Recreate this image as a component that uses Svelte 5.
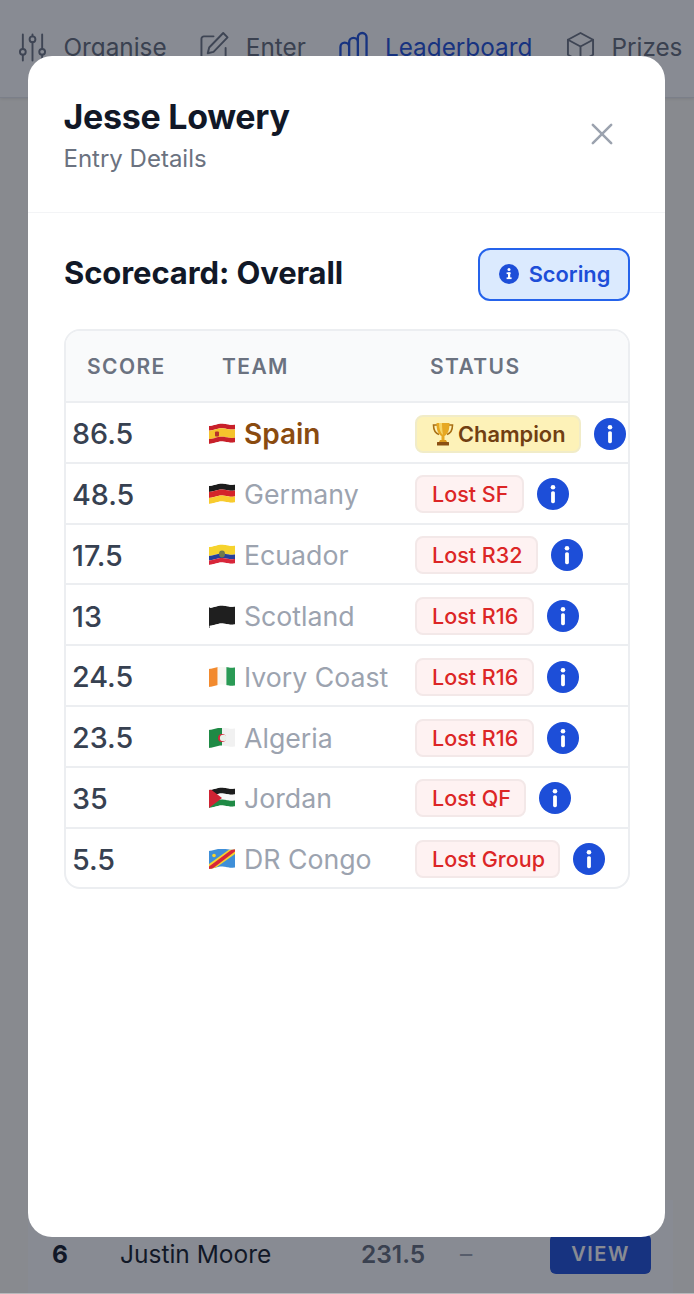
<script>
  const wave = (y, x) => y + 0.9 * Math.cos((x / 26) * Math.PI * 2.2) - x * 0.05;
  function band(a, b) {
    const xs = Array.from({ length: 27 }, (_, i) => i);
    const top = xs.map((x) => `${x},${wave(a, x).toFixed(2)}`);
    const bot = xs.slice().reverse().map((x) => `${x},${wave(b, x).toFixed(2)}`);
    return top.concat(bot).join(' ');
  }
  const rows = [
    { score: '86.5', team: 'Spain', flag: [['#c8202a', 1, 5.8], ['#f5c32c', 5.8, 14.2], ['#c8202a', 14.2, 19]], status: 'Champion', win: true },
    { score: '48.5', team: 'Germany', flag: [['#1c1c1c', 1, 7], ['#d4242a', 7, 13], ['#f8cb2e', 13, 19]], status: 'Lost SF' },
    { score: '17.5', team: 'Ecuador', flag: [['#f6d32d', 1, 10], ['#27409c', 10, 14.5], ['#d8263a', 14.5, 19]], status: 'Lost R32' },
    { score: '13', team: 'Scotland', flag: [['#1f1f1f', 1, 19]], status: 'Lost R16', black: true },
    { score: '24.5', team: 'Ivory Coast', vert: ['#f28a2e', '#f7f7f2', '#2a9a55'], status: 'Lost R16' },
    { score: '23.5', team: 'Algeria', vert2: true, status: 'Lost R16' },
    { score: '35', team: 'Jordan', flag: [['#1c1c1c', 1, 7], ['#f8f8f8', 7, 13], ['#1f8a45', 13, 19]], status: 'Lost QF', tri: true },
    { score: '5.5', team: 'DR Congo', congo: true, status: 'Lost Group' }
  ];
  const nav = [
    { t: 'Organise', i: 'org' },
    { t: 'Enter', i: 'ent' },
    { t: 'Leaderboard', i: 'lead', on: true },
    { t: 'Prizes', i: 'box' }
  ];
</script>

{#snippet flag(r, i)}
  <svg class="flag" viewBox="0 0 26 20" aria-hidden="true">
    <defs><clipPath id={'fc' + i}><polygon points={band(1, 19)} /></clipPath></defs>
    {#if r.black}
      <line x1="0.5" y1="1" x2="0.5" y2="22" stroke="#8b8b8b" stroke-width="1" />
    {/if}
    <g clip-path={'url(#fc' + i + ')'}>
      {#if r.flag}
        {#each r.flag as s}
          <polygon points={band(s[1], s[2])} fill={s[0]} />
        {/each}
      {/if}
      {#if r.team === 'Spain'}
        <rect x="6" y="7.500" width="4" height="5" rx="1" fill="#b5332a" />
      {/if}
      {#if r.team === 'Ecuador'}
        <ellipse cx="13" cy="9" rx="3" ry="3.4" fill="#6f7a4e" />
      {/if}
      {#if r.vert}
        <rect x="0" y="0" width="8.7" height="20" fill={r.vert[0]} />
        <rect x="8.7" y="0" width="8.7" height="20" fill={r.vert[1]} />
        <rect x="17.4" y="0" width="8.6" height="20" fill={r.vert[2]} />
      {/if}
      {#if r.vert2}
        <rect x="0" y="0" width="13" height="20" fill="#1f8a45" />
        <rect x="13" y="0" width="13" height="20" fill="#f1f1f1" />
        <circle cx="13" cy="10" r="4" fill="#d8263a" />
        <circle cx="14.2" cy="10" r="3.3" fill="#e9f1ea" />
      {/if}
      {#if r.tri}
        <polygon points="0,0 13,10 0,20" fill="#cf2333" />
      {/if}
      {#if r.congo}
        <rect x="0" y="0" width="26" height="20" fill="#3f8fd8" />
        <polygon points="0,20 0,15 21,0 26,0 26,5 5,20" fill="#f6d32d" />
        <polygon points="0,20 0,17.5 23.5,0 26,0 26,2.5 3,20" fill="#d8263a" />
        <circle cx="5" cy="6.5" r="1.8" fill="#f6d32d" />
      {/if}
    </g>
  </svg>
{/snippet}

{#snippet navIcon(k)}
  <svg class="navicon" viewBox="0 0 30 32" fill="none" stroke="currentColor" stroke-width="2" stroke-linecap="round" stroke-linejoin="round" aria-hidden="true">
    {#if k === 'org'}
      <path d="M5 3v15M5 24v6M15 3v2M15 11v19M25 3v15M25 24v6" />
      <circle cx="5" cy="21" r="3" /><circle cx="15" cy="8" r="3" /><circle cx="25" cy="21" r="3" />
    {:else if k === 'ent'}
      <path d="M14 5H4a2.500 2.500 0 0 0-2.500 2.500v20A2.500 2.500 0 0 0 4 30h20a2.500 2.500 0 0 0 2.500-2.500V17" />
      <path d="M24 1.500l4.500 4.500L14 21l-6 1.500 1.500-6z" />
    {:else if k === 'lead'}
      <path d="M1.500 32V16a4.500 4.500 0 0 1 9 0v16M10.500 32V11a4.500 4.500 0 0 1 9 0v21M19.500 32V6a4.500 4.500 0 0 1 9 0v26" stroke-width="2.400" />
    {:else}
      <path d="M15 1.500l13 7v15.500l-13 7-13-7V8.500z" />
      <path d="M2 8.500L15 15.500l13-7M15 15.500V31" />
    {/if}
  </svg>
{/snippet}

{#snippet info()}
  <svg class="info" viewBox="0 0 32 32" aria-hidden="true">
    <circle cx="16" cy="16" r="16" fill="#1d4ed8" />
    <circle cx="16" cy="9.2" r="2.3" fill="#fff" />
    <rect x="14.1" y="13.2" width="3.8" height="12" rx="1.6" fill="#fff" />
  </svg>
{/snippet}

<div class="page">
  <nav class="nav">
    {#each nav as n}
      <span class="navitem" class:on={n.on}>{@render navIcon(n.i)}{n.t}</span>
    {/each}
  </nav>
  <div class="spacer"></div>
  <div class="card">
    <div class="lrow">
      <span class="rank">6</span>
      <span class="name">Justin Moore</span>
      <span class="pts">231.5</span>
      <span class="dash">–</span>
      <span class="view">VIEW</span>
    </div>
  </div>
</div>

<div class="overlay">
  <div class="modal">
    <header class="head">
      <div>
        <h1>Jesse Lowery</h1>
        <p>Entry Details</p>
      </div>
      <svg class="close" viewBox="0 0 24 24" fill="none" stroke="currentColor" stroke-width="2.800" stroke-linecap="round" aria-hidden="true">
        <path d="M2 2l20 20M22 2L2 22" />
      </svg>
    </header>
    <section class="body">
      <div class="titlebar">
        <h2>Scorecard: Overall</h2>
        <button class="scoring">
          <svg viewBox="0 0 22 22" aria-hidden="true">
            <circle cx="11" cy="11" r="10" fill="#1d4ed8" />
            <rect x="8.6" y="9.4" width="4" height="1.7" fill="#fff" />
            <rect x="10" y="9.4" width="2.2" height="6" fill="#fff" />
            <rect x="8.6" y="14.4" width="5" height="1.7" fill="#fff" />
            <circle cx="11" cy="6.6" r="1.5" fill="#fff" />
          </svg>
          Scoring
        </button>
      </div>
      <div class="table">
        <div class="thead">
          <span>SCORE</span><span>TEAM</span><span class="st">STATUS</span>
        </div>
        {#each rows as r, i}
          <div class="tr">
            <span class="score">{r.score}</span>
            <span class="team" class:champ={r.win}>{@render flag(r, i)}{r.team}</span>
            <span class="status">
              <span class="badge" class:win={r.win}>
                {#if r.win}
                  <svg class="trophy" viewBox="0 0 22 24" fill="none" aria-hidden="true">
                    <path d="M5 3H1.500c0 5 1.500 8 5.500 9.500M17 3h3.500c0 5-1.500 8-5.500 9.500" stroke="#a86f14" stroke-width="1.600" />
                    <path d="M4.500 1h13c0 7-1.500 11-5 13v4h-3v-4c-3.500-2-5-6-5-13z" fill="#e6a822" />
                    <path d="M7 1h3c0 5 .5 8 1 12-2.500-2-4-6-4-12z" fill="#f6d465" />
                    <path d="M8 18h6l1 2H7z" fill="#d9971c" />
                    <rect x="5" y="20" width="12" height="3.500" rx=".5" fill="#8a4f12" />
                  </svg>
                {/if}
                {r.status}
              </span>
              {@render info()}
            </span>
          </div>
        {/each}
      </div>
    </section>
  </div>
  <div class="foot"></div>
</div>

<style>
  :global(body) {
    margin: 0;
    font-family: Inter, "Liberation Sans", sans-serif;
    background: #fffdf6;
  }
  .page {
    height: 1294px;
    overflow: hidden;
    display: flex;
    flex-direction: column;
    background: #fffdf6;
  }
  .nav {
    height: 98px;
    box-sizing: border-box;
    flex: none;
    background: #fff;
    border-bottom: 1px solid #e5e7eb;
    box-shadow: 0 1px 3px rgba(0, 0, 0, 0.1);
    display: flex;
    gap: 33.700px;
    padding: 31px 0 0 18px;
    font-size: 24.300px;
    color: #626a78;
    white-space: nowrap;
  }
  .navitem {
    display: flex;
    align-items: flex-start;
    gap: 16.500px;
    line-height: 32px;
  }
  .navitem.on {
    color: #1d4ed8;
  }
  .navicon {
    width: 29px;
    height: 32px;
    flex: none;
    color: #6b7280;
  }
  .on .navicon {
    color: #1d4ed8;
  }
  .spacer {
    flex: 1;
  }
  .card {
    margin: 0 21px 1px 28px;
    background: #fff;
    height: 93px;
    box-sizing: border-box;
    padding: 34px 22px 0 24px;
  }
  .lrow {
    display: flex;
    align-items: center;
    font-size: 24.500px;
    height: 40px;
    color: #111827;
  }
  .rank {
    font-weight: 700;
    width: 68px;
  }
  .name {
    width: 241px;
  }
  .pts {
    width: 99px;
    font-weight: 600;
    color: #626a78;
  }
  .dash {
    color: #9ca3af;
    width: 90px;
  }
  .view {
    width: 101px;
    height: 40px;
    flex: none;
    background: #1d4ed8;
    color: #fff;
    border-radius: 6px;
    font-size: 20px;
    font-weight: 600;
    letter-spacing: 1.500px;
    display: flex;
    align-items: center;
    justify-content: center;
  }
  .overlay {
    position: fixed;
    inset: 0;
    background: rgba(17, 24, 39, 0.5);
    backdrop-filter: blur(0.5px);
  }
  .foot {
    position: absolute;
    left: 0;
    right: 0;
    bottom: 0;
    height: 1px;
    background: #b8b9bc;
  }
  .modal {
    position: absolute;
    left: 28px;
    top: 56px;
    width: 637px;
    height: 1181px;
    background: #fff;
    border-radius: 24px;
    overflow: hidden;
  }
  .head {
    height: 157px;
    box-sizing: border-box;
    border-bottom: 1px solid #f3f4f6;
    padding: 40px 52px 0 35.500px;
    display: flex;
    justify-content: space-between;
    align-items: flex-start;
  }
  h1 {
    margin: 0;
    font-size: 34px;
    line-height: 42px;
    font-weight: 700;
    color: #111827;
    letter-spacing: -0.3px;
  }
  .head p {
    margin: 5px 0 0;
    font-size: 24px;
    line-height: 32px;
    color: #6b7280;
  }
  .close {
    width: 22px;
    height: 22px;
    margin-top: 27px;
    color: #9ca3af;
  }
  .body {
    padding: 35px 35px 0 36px;
  }
  .titlebar {
    display: flex;
    justify-content: space-between;
    align-items: center;
    height: 53px;
  }
  h2 {
    margin: 0 0 5px;
    font-size: 31px;
    font-weight: 700;
    color: #111827;
    letter-spacing: -0.1px;
  }
  .scoring {
    width: 152px;
    height: 53px;
    box-sizing: border-box;
    background: #dbeafe;
    border: 2px solid #2563eb;
    border-radius: 12px;
    color: #1d4ed8;
    font: 600 21.800px Inter, sans-serif;
    display: flex;
    align-items: center;
    justify-content: center;
    gap: 9px;
    padding: 0 0 2px;
  }
  .scoring svg {
    width: 22px;
    height: 22px;
  }
  .table {
    margin-top: 28px;
    border: 2px solid #eceef1;
    border-radius: 16px;
    overflow: hidden;
  }
  .thead {
    display: grid;
    grid-template-columns: 135px 207px 1fr;
    height: 70px;
    align-items: center;
    background: #f9fafb;
    font-size: 21px;
    font-weight: 600;
    letter-spacing: 1.400px;
    color: #6b7280;
  }
  .thead span {
    padding-left: 21px;
  }
  .thead .st {
    padding-left: 22px;
  }
  .tr {
    display: grid;
    grid-template-columns: 135px 207px 1fr;
    height: 60.800px;
    box-sizing: border-box;
    padding-top: 2.500px;
    align-items: center;
    border-top: 2px solid #eceef1;
  }
  .score {
    padding-left: 6px;
    font-size: 28.700px;
    font-weight: 500;
    color: #374151;
  }
  .team {
    display: flex;
    align-items: center;
    gap: 9px;
    padding-left: 8px;
    font-size: 26.700px;
    color: #9ca3af;
    white-space: nowrap;
  }
  .champ {
    color: #8a4b10;
    font-weight: 600;
    font-size: 28px;
  }
  .flag {
    width: 26px;
    height: 20px;
    flex: none;
    overflow: visible;
  }
  .status {
    display: flex;
    align-items: center;
    gap: 13px;
    padding-left: 7px;
  }
  .badge {
    display: flex;
    align-items: center;
    height: 38px;
    box-sizing: border-box;
    padding: 0 13.500px 0 15px;
    border: 2px solid #f3e8e8;
    border-radius: 8px;
    background: #fef2f2;
    color: #dc2626;
    font-size: 21.500px;
    font-weight: 450;
    white-space: nowrap;
  }
  .badge.win {
    background: #fdf2b8;
    border-color: #f1ecc8;
    color: #713f12;
    font-weight: 600;
    font-size: 21.800px;
    gap: 4px;
  }
  .trophy {
    width: 22px;
    height: 24px;
    flex: none;
  }
  .info {
    width: 32px;
    height: 32px;
    flex: none;
  }
</style>
